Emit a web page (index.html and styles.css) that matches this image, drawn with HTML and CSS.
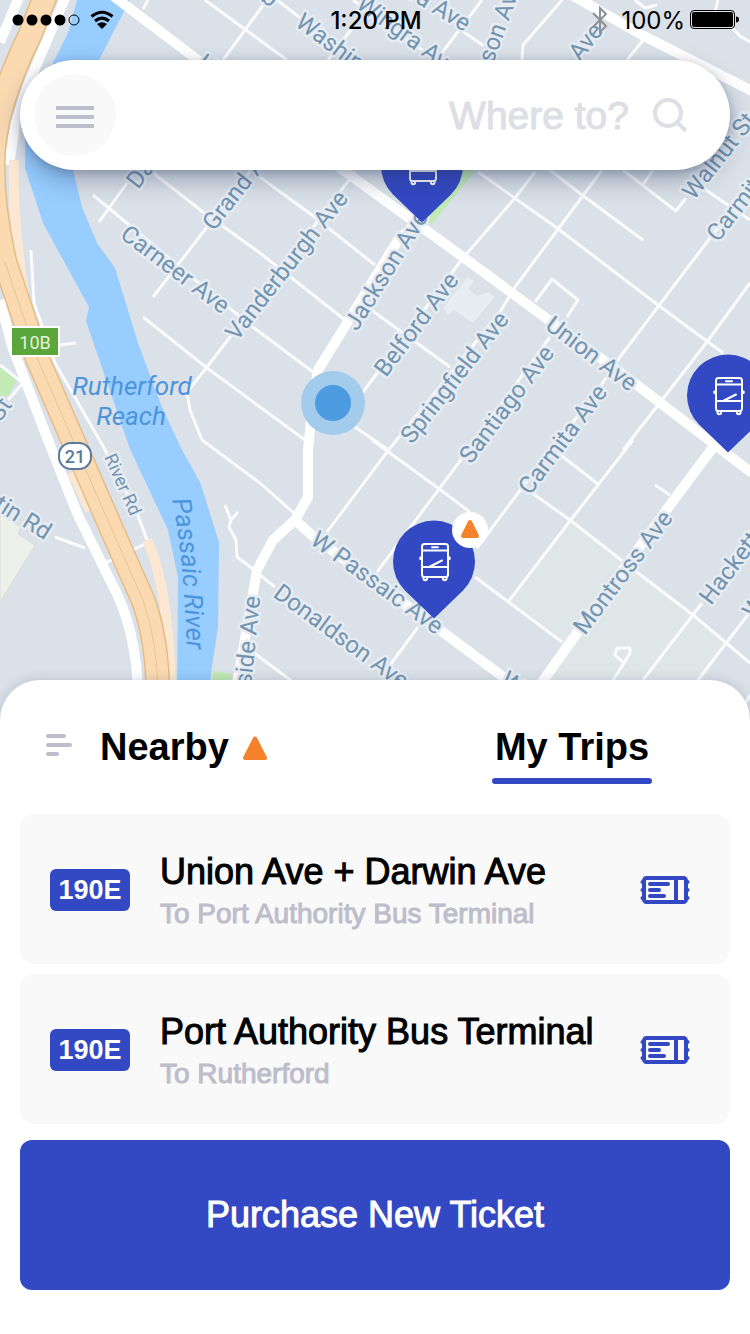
FILE: index.html
```html
<!DOCTYPE html>
<html lang="en">
<head>
<meta charset="utf-8">
<meta name="viewport" content="width=device-width, initial-scale=1">
<title>Bus Trips</title>
<link rel="stylesheet" href="styles.css">
</head>
<body>
<div class="screen">
  <div class="map-area">
    <svg class="map" viewBox="0 0 750 720" preserveAspectRatio="xMidYMin slice" role="img" aria-label="Map of nearby bus stops">
      <defs>
        <g id="bus-pin">
          <path class="pin-shape" d="M0 57.500 L-29 29.500 A41 41 0 1 1 29 29.500 Z"/>
          <g class="bus">
            <rect x="-12" y="-17" width="26" height="33" rx="2.500"/>
            <path d="M-12 -10.500H14M-12 6H14M-2 -13.700H4M-13.700 -3.500V-2M15.700 -3.500V-2M-4 5.500L8 -0.500"/>
            <path d="M-10.500 16v1.500a1.800 1.800 0 0 0 3.600 0V16M8.900 16v1.500a1.800 1.800 0 0 0 3.600 0V16"/>
          </g>
        </g>
      </defs>
      <rect class="land" width="750" height="720"/>
      <path class="campus" d="M572 521L622 561L727 643L690 700H535L562 642L510 602Z"/>
      <path class="plot" d="M0 515L21 527L18 534L35 545L0 602Z"/>
      <path class="park" d="M0 367L17 380L8 396L0 396ZM458 170H476L432 224L424 219ZM213 671L232 674V690H211Z"/>
      <path class="school" d="M467 277L474 281L468 289L477 296L488 292L495 297L473 323L454 310L448 315L443 308Z"/>
      <path class="water" d="M77 0L68 33L53 63L25 130V168L43 223L89 307L86 321L130 449L168 530L178 577L177 700H209L211 673L218 627L219 542L200 482L182 450L161 405L138 343L115 268L97 243L82 207L73 170L75 110L100 58L130 0Z"/>

      <g class="street">
        <path d="M205 0L287 60M267 0L223 60M148 0L143 9M277 0L345 52M328 60L353 27M482 0L438 58M458 28L484 46M562 0L523 45L522 60M635 0L645 8L657 5M718 0L715 12M728 23L740 36L750 42M645 38L627 60M353 0L450 70"/>
        <path d="M152 172L203 212L260 253L345 320M257 175L312 215L375 265M93 195L250 325L313 372M143 317L207 368L305 440M127 183L99 222M153 297L255 165M355 172L230 337L207 367L187 392L190 410L202 440L260 483L295 514"/>
        <path d="M370 309L450 367M355 427L387 449M372 440L438 488L470 512M475 577L562 642M327 532L387 452L500 312L515 287L602 170M363 392L463 258L515 198L535 172M377 572L463 457L550 337M567 317L578 300L552 279L535 302M477 548L518 493L600 387L620 357L707 242L750 185"/>
        <path d="M478 172L557 228L658 305L723 353M550 170L582 195L643 240M623 170L676 211L686 198M643 185L653 170M703 188L750 220M623 450L658 405L707 342L750 283M633 440L570 521L508 602M558 453L598 484M532 493L570 520L625 563L693 615L750 663M643 680L702 603M698 680L750 612M655 485L670 495M612 682L624 663L615 655L617 648L630 648L630 653L624 663M740 712L750 695"/>
        <path d="M225 505L231 520L238 512M231 520L229 527L236 540L237 557L253 569M250 567L275 587M250 650L293 682M418 627L385 672M31 250L34 303L55 363L103 446L137 513L147 540M147 543L103 564M55 537L85 548M60 345L76 343M0 365L23 383L8 400"/>
      </g>
      <g class="avenue">
        <path d="M108 -8L343 170L463 257L633 382L752 473"/>
        <path d="M570 -6L642 35L752 91"/>
        <path d="M420 220L398 240L347 323L318 370L313 400L308 450V497L295 520L273 540L257 570L236 690"/>
        <path d="M295 520L314 537L440 630L510 682"/>
        <path d="M714 446L670 505L577 633L540 685"/>
        <path d="M0 300L12 346L48 440L77 513L110 580Q138 630 138 700"/>
        <path d="M66 -4L45 45L28 85L15 125L9 165M22 -10L0 42"/>
      </g>
      <path class="ramp" d="M14 160Q12 220 25 300M147 540Q170 590 171 700M72 472L90 510"/>
      <path class="highway-edge" d="M46 -6L30 35Q-7 110 -7 165Q-7 210 5 262L38 360L75 445L112 530L143 600Q158 640 158 700"/>
      <path class="highway" d="M46 -6L30 35Q-7 110 -7 165Q-7 210 5 262L38 360L75 445L112 530L143 600Q158 640 158 700"/>
      <path class="median" d="M5 262L38 360L75 445L112 530L143 600Q158 640 158 700"/>

      <g class="road-name">
        <text transform="translate(119 237) rotate(37)">Carneer Ave</text>
        <text transform="translate(237 342) rotate(-52)">Vanderburgh Ave</text>
        <text transform="translate(357 332) rotate(-58)">Jackson Ave</text>
        <text transform="translate(386 378) rotate(-53)">Belford Ave</text>
        <text transform="translate(412 445) rotate(-52)">Springfield Ave</text>
        <text transform="translate(471 465) rotate(-53)">Santiago Ave</text>
        <text transform="translate(530 496) rotate(-53)">Carmita Ave</text>
        <text transform="translate(585 636) rotate(-53)">Montross Ave</text>
        <text transform="translate(711 606) rotate(-53)">Hackett</text>
        <text transform="translate(754 620) rotate(-53)">W</text>
        <text transform="translate(718 243) rotate(-52)">Carmita</text>
        <text transform="translate(694 201) rotate(-52)">Walnut St</text>
        <text transform="translate(580 62) rotate(-52)">Ave</text>
        <text transform="translate(493 64) rotate(-70)">son Ave</text>
        <text transform="translate(544 328) rotate(37)">Union Ave</text>
        <text transform="translate(309 543) rotate(36)">W Passaic Ave</text>
        <text transform="translate(272 596) rotate(36)">Donaldson Ave</text>
        <text transform="translate(499 683) rotate(36)">W</text>
        <text transform="translate(251 686) rotate(-84)">side Ave</text>
        <text transform="translate(294 25) rotate(37)">Washington</text>
        <text transform="translate(355 7) rotate(36)">Wingra Ave</text>
        <text transform="translate(408 -2) rotate(31)">ra Ave</text>
        <text transform="translate(260 0) rotate(37)">b</text>
        <text transform="translate(196 66) rotate(37)">Union</text>
        <text transform="translate(138 190) rotate(-52)">Da</text>
        <text transform="translate(214 232) rotate(-52)">Grand Ave</text>
        <text transform="translate(-7 508) rotate(32)">tin Rd</text>
        <text transform="translate(0 423) rotate(-55)">St</text>
        <text class="small" transform="translate(104 457) rotate(66)">River Rd</text>
      </g>
      <g class="water-name">
        <path id="river-line" d="M172 500Q185 560 187 664" fill="none"/>
        <text><textPath href="#river-line">Passaic River</textPath></text>
        <text x="132" y="395" text-anchor="middle">Rutherford</text>
        <text x="131" y="425" text-anchor="middle">Reach</text>
      </g>
      <rect class="exit-sign" x="11" y="327" width="48" height="29"/>
      <text class="exit-text" x="35" y="349">10B</text>
      <rect class="shield" x="59" y="443" width="32" height="26" rx="12"/>
      <text class="shield-text" x="75" y="463">21</text>

      <circle class="position-halo" cx="333" cy="403" r="32"/>
      <circle class="position" cx="333" cy="403" r="18"/>
      <use href="#bus-pin" x="422" y="165"/>
      <use href="#bus-pin" x="728" y="395"/>
      <use href="#bus-pin" x="434" y="561"/>
      <circle class="alert-disc" cx="470" cy="530" r="18"/>
      <path class="alert" d="M470 522L477 536H463Z"/>
    </svg>

    <div class="status">
      <svg class="signal" viewBox="0 0 104 24" aria-label="Signal and Wi-Fi">
        <circle cx="6" cy="12" r="5.500"/><circle cx="20" cy="12" r="5.500"/><circle cx="34" cy="12" r="5.500"/><circle cx="48" cy="12" r="5.500"/>
        <circle class="hollow" cx="62" cy="12" r="5"/>
        <path class="wave" d="M79.500 8.500Q90 0 100.500 8.500M83 13Q90 7.200 97 13"/>
        <path d="M90 21L85 16Q90 12.500 95 16Z"/>
      </svg>
      <time class="clock">1:20 PM</time>
      <div class="power">
        <svg class="bluetooth" viewBox="0 0 18 28" aria-label="Bluetooth"><path d="M2 7L15 20L9 26V2L15 8L2 21"/></svg>
        <span class="percent">100%</span>
        <svg class="battery" viewBox="0 0 50 20" aria-label="Battery full"><rect class="case" x=".5" y=".5" width="44" height="18" rx="3.500"/><rect x="2" y="2" width="41" height="15" rx="2"/><path d="M46 6.500Q49 6.500 49 9.500T46 12.500Z"/></svg>
      </div>
    </div>

    <form class="search" role="search">
      <button class="menu" type="button" aria-label="Menu">
        <svg viewBox="0 0 38 22"><path d="M0 2H38M0 11H38M0 20H38"/></svg>
      </button>
      <input class="destination" type="text" placeholder="Where to?" aria-label="Destination">
      <button class="find" type="button" aria-label="Search">
        <svg viewBox="0 0 34 34"><circle cx="15" cy="15" r="13"/><path d="M24.500 24.500L31.500 31.500"/></svg>
      </button>
    </form>
  </div>

  <main class="sheet">
    <nav class="tabs">
      <button class="tab" type="button">
        <svg class="sort" viewBox="0 0 26 22"><path d="M2 2H18M2 11H24M2 20H11"/></svg>
        <span>Nearby</span>
        <svg class="warning" viewBox="0 0 24 24"><path d="M12 2.500L22 22H2Z"/></svg>
      </button>
      <button class="tab current" type="button" aria-current="true">My Trips</button>
    </nav>

    <ul class="trips">
      <li>
        <a class="trip" href="#union">
          <span class="route">190E</span>
          <span class="where"><span class="stop">Union Ave + Darwin Ave</span><span class="toward">To Port Authority Bus Terminal</span></span>
          <svg class="ticket" viewBox="0 0 50 28"><rect x="4" y="2" width="42" height="24" rx="2.500"/><path d="M36 2V26"/><path class="lines" d="M10 8H28M10 14H19M10 20H24M2.500 6H4M2.500 14H4M2.500 22H4M46 6H47.500M46 14H47.500M46 22H47.500"/></svg>
        </a>
      </li>
      <li>
        <a class="trip" href="#port-authority">
          <span class="route">190E</span>
          <span class="where"><span class="stop">Port Authority Bus Terminal</span><span class="toward">To Rutherford</span></span>
          <svg class="ticket" viewBox="0 0 50 28"><rect x="4" y="2" width="42" height="24" rx="2.500"/><path d="M36 2V26"/><path class="lines" d="M10 8H28M10 14H19M10 20H24M2.500 6H4M2.500 14H4M2.500 22H4M46 6H47.500M46 14H47.500M46 22H47.500"/></svg>
        </a>
      </li>
    </ul>

    <button class="purchase" type="button">Purchase New Ticket</button>
  </main>
</div>
</body>
</html>
```

FILE: styles.css
```css
* {
  box-sizing: border-box;
}

body {
  margin: 0;
  background: #fff;
  color: #000;
  font-family: "Liberation Sans", Arial, sans-serif;
}

button {
  margin: 0;
  padding: 0;
  border: 0;
  background: none;
  color: inherit;
  font: inherit;
  cursor: pointer;
}

.screen {
  display: flex;
  flex-direction: column;
  min-height: 100vh;
}

/* Map */
.map-area {
  position: relative;
  flex: 1 0 720px;
  overflow: hidden;
  background: #dae1e8;
}

.map {
  position: absolute;
  inset: 0;
  width: 100%;
  height: 100%;
}

.land { fill: #dae1e8; }
.campus { fill: #dee6e7; }
.plot { fill: #eef0ec; stroke: #dcdcd8; }
.park { fill: #c3e9b5; }
.school { fill: #e8ecf3; }
.water { fill: #97cdff; }

.street {
  fill: none;
  stroke: #fafcfd;
  stroke-width: 3;
  stroke-linejoin: round;
}

.avenue {
  fill: none;
  stroke: #fff;
  stroke-width: 10;
  stroke-linejoin: round;
}

.ramp {
  fill: none;
  stroke: #fce8d2;
  stroke-width: 10;
}

.highway-edge,
.highway,
.median {
  fill: none;
  stroke-linejoin: round;
}

.highway-edge { stroke: #e5bc86; stroke-width: 25; }
.highway { stroke: #fbdab2; stroke-width: 22; }
.median { stroke: #e9c592; stroke-width: 1; }

.road-name {
  fill: #7294b1;
  stroke: #e6ecf2;
  stroke-width: 5;
  stroke-linejoin: round;
  paint-order: stroke;
  font: 400 24px Roboto, sans-serif;
}

.road-name .small { font-size: 18px; }

.water-name {
  fill: #4d94dd;
  font: italic 400 26px Roboto, sans-serif;
}

.exit-sign { fill: #5ba63b; stroke: #fff; stroke-width: 2; }
.exit-text { fill: #e4f3df; font: 400 18px Roboto, sans-serif; text-anchor: middle; }
.shield { fill: #fff; stroke: #587b9b; stroke-width: 2; }
.shield-text { fill: #587b9b; font: 500 18px Roboto, sans-serif; text-anchor: middle; }

.position-halo { fill: #a3cbeb; }
.position { fill: #4d9be0; }
.pin-shape { fill: #3348c3; }
.bus { fill: none; stroke: #fff; stroke-width: 2; stroke-linecap: round; stroke-linejoin: round; }
.alert-disc { fill: #fff; }

.alert,
.warning {
  fill: #f5822b;
  stroke: #f5822b;
  stroke-width: 4;
  stroke-linejoin: round;
}

/* Status bar */
.status {
  position: relative;
  display: grid;
  grid-template-columns: 1fr auto 1fr;
  align-items: center;
  height: 40px;
  padding: 0 10px 0 12px;
  font: 400 24px/38px Inter, sans-serif;
}

.signal { width: 104px; height: 24px; }
.signal .hollow { fill: none; stroke: #000; }
.signal .wave { fill: none; stroke: #000; stroke-width: 3; }

.clock,
.percent {
  padding-top: 2px;
}

.clock { font-weight: 500; }

.power {
  display: flex;
  align-items: center;
  justify-content: flex-end;
}

.bluetooth {
  width: 18px;
  height: 28px;
  margin-right: 12px;
  fill: none;
  stroke: #8b9094;
  stroke-width: 2;
}

.percent { margin-right: 5px; }
.battery { width: 50px; height: 20px; }
.battery .case { fill: none; stroke: #000; }

/* Search */
.search {
  position: relative;
  display: flex;
  align-items: center;
  gap: 24px;
  height: 110px;
  margin: 20px;
  padding: 0 43px 0 14px;
  border-radius: 55px;
  background: #fff;
  box-shadow: 0 10px 24px rgba(40, 56, 92, 0.36), 0 2px 8px rgba(40, 56, 92, 0.24);
}

.menu {
  display: grid;
  place-items: center;
  flex: none;
  width: 82px;
  height: 82px;
  padding-top: 4px;
  border-radius: 50%;
  background: #f9f9f9;
}

.menu svg {
  width: 38px;
  height: 22px;
  stroke: #bdbdcb;
  stroke-width: 4;
}

.destination {
  flex: 1;
  min-width: 0;
  padding: 2px 0 0;
  border: 0;
  outline: 0;
  background: none;
  font: 39px/48px "Liberation Sans", Arial, sans-serif;
  text-align: right;
}

.destination::placeholder {
  color: #dedee5;
  opacity: 1;
  -webkit-text-stroke: 1px #dedee5;
}

.find svg {
  display: block;
  width: 34px;
  height: 34px;
  fill: none;
  stroke: #dedee5;
  stroke-width: 4;
  stroke-linecap: round;
}

/* Sheet */
.sheet {
  position: relative;
  margin-top: -40px;
  padding: 36px 20px 44px;
  border-radius: 40px 40px 0 0;
  background: #fff;
  box-shadow: 0 0 12px rgba(40, 56, 92, 0.2);
}

.tabs {
  display: flex;
  justify-content: space-between;
  padding: 0 78px 0 26px;
}

.tab {
  display: flex;
  align-items: center;
  height: 68px;
  border-bottom: 6px solid transparent;
  font: bold 38px/60px "Liberation Sans", Arial, sans-serif;
}

.current {
  position: relative;
  justify-content: center;
  width: 160px;
}

.current::after {
  content: "";
  position: absolute;
  inset: auto 0 -6px;
  height: 6px;
  border-radius: 3px;
  background: #3348c3;
}

.sort {
  width: 26px;
  height: 22px;
  margin: 0 28px 4px 0;
  stroke: #bdbdcb;
  stroke-width: 4;
  stroke-linecap: round;
}

.warning {
  width: 24px;
  height: 24px;
  margin: 2px 0 0 14px;
}

.trips {
  display: flex;
  flex-direction: column;
  gap: 10px;
  margin: 30px 0 16px;
  padding: 0;
  list-style: none;
}

.trip {
  display: flex;
  align-items: center;
  gap: 30px;
  min-height: 150px;
  padding: 2px 40px 0 30px;
  border-radius: 14px;
  background: #f9f9f9;
  color: inherit;
  text-decoration: none;
}

.route {
  flex: none;
  width: 80px;
  border-radius: 6px;
  background: #3348c3;
  color: #fff;
  font-weight: bold;
  font-size: 27px;
  line-height: 42px;
  text-align: center;
}

.where {
  display: flex;
  flex: 1;
  flex-direction: column;
  padding-top: 4px;
}

.stop {
  font-size: 36px;
  line-height: 44px;
  -webkit-text-stroke: 1px;
}

.toward {
  color: #bdbdcb;
  font-size: 28px;
  line-height: 40px;
  -webkit-text-stroke: 1px;
}

.ticket {
  flex: none;
  width: 50px;
  height: 28px;
  fill: none;
  stroke: #3348c3;
  stroke-width: 4;
}

.ticket .lines { stroke-linecap: round; }

.purchase {
  display: block;
  width: 100%;
  height: 150px;
  border-radius: 12px;
  background: #3348c3;
  color: #fff;
  font-size: 36px;
  -webkit-text-stroke: 1px;
}
```
